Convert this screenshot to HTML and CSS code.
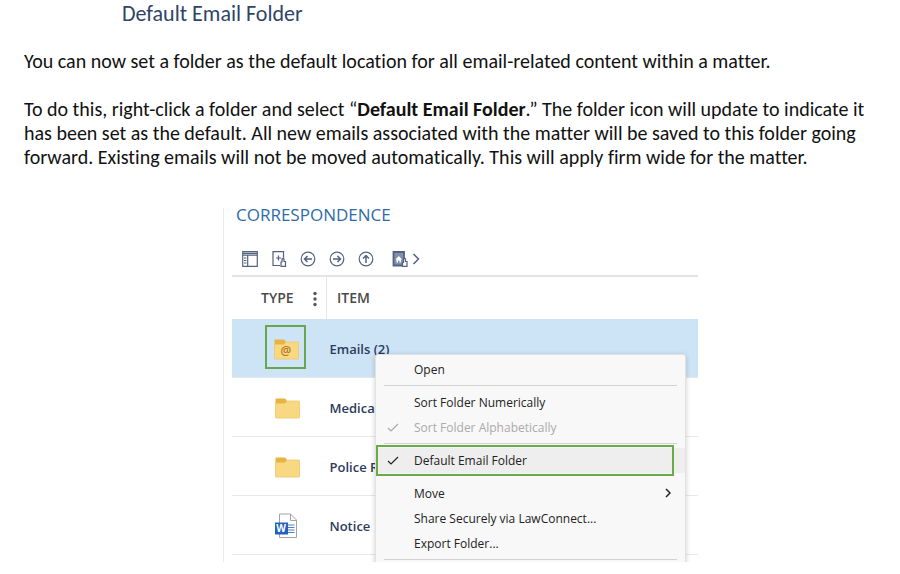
FILE: index.html
```html
<!DOCTYPE html>
<html lang="en">

<head>
  <meta charset="UTF-8">
  <meta name="viewport" content="width=device-width, initial-scale=1.0">
  <title>Default Email Folder</title>
  <link rel="stylesheet" href="styles.css">
</head>

<body>
  <!-- shared folder icon -->
  <svg class="defs" width="0" height="0" aria-hidden="true">
    <symbol id="folder" viewBox="0 0 25 22">
      <path d="M1 1.5h9l2.5 3V8H.5V2z" fill="#e8b342" />
      <path d="M.5 6.5h9l3-2.500h11.500q.5 0 .5.5v16q0 .5-.5.5H1q-.5 0-.5-.5z" fill="#f8d982" stroke="#efc765" stroke-width=".8" />
    </symbol>
  </svg>

  <main class="doc">
    <h1>Default Email Folder</h1>
    <p>You can now set a folder as the default location for all email-related content within a matter.</p>
    <p>To do this, right-click a folder and select “<strong>Default Email Folder</strong>.” The folder icon will update to indicate it has been set as the default. All new emails associated with the matter will be saved to this folder going forward. Existing emails will not be moved automatically. This will apply firm wide for the matter.</p>

    <section class="panel">
      <h2>CORRESPONDENCE</h2>

      <div class="toolbar">
        <button type="button" aria-label="Layout">
          <svg width="16" height="16" viewBox="0 0 16 16">
            <path d="M.7.7h14.600v14.600H.7zM.7 4.200h14.600M5.700 4.200v11M1 2.400h14M2 7h2.500M2 9.500h2.500M2 12h2.500" />
          </svg>
        </button>
        <button type="button" aria-label="New document">
          <svg width="16" height="16" viewBox="0 0 16 16">
            <path d="M9 14.500H2V.7h10.500v6M5 7h5M7.500 4.500v5M10 15.300V11h1V8q1-1 2 0v2.500h1.500v4.800z" />
          </svg>
        </button>
        <button type="button" aria-label="Back">
          <svg width="16" height="16" viewBox="0 0 16 16">
            <circle cx="8" cy="8" r="6.800" />
            <path class="arrow" d="M12 8H4.500M7.500 5l-3 3 3 3" />
          </svg>
        </button>
        <button type="button" aria-label="Forward">
          <svg width="16" height="16" viewBox="0 0 16 16">
            <circle cx="8" cy="8" r="6.800" />
            <path class="arrow" d="M4 8h7.500M8.500 5l3 3-3 3" />
          </svg>
        </button>
        <button type="button" aria-label="Up">
          <svg width="16" height="16" viewBox="0 0 16 16">
            <circle cx="8" cy="8" r="6.800" />
            <path class="arrow" d="M8 12V4.500M5 7.500l3-3 3 3" />
          </svg>
        </button>
        <button type="button" class="home" aria-label="Home folder">
          <svg width="28" height="16" viewBox="0 0 28 16">
            <path d="M1.500 1h10.500v13.500H1.500z" fill="#8191b0" stroke-width="1.800" />
            <path d="M3.500 8.500l3.300-3.500 3.300 3.500H9v3H7.500V9.500H6v2H4.500v-3z" fill="#fff" stroke="none" />
            <path d="M10.500 15.300V11.500h1V8q1-1 2 0v2.500h1.500v4.800z" fill="#fff" />
            <path d="M21.500 3l5 5-5 5" stroke-width="1.500" />
          </svg>
        </button>
      </div>

      <table>
        <thead>
          <tr>
            <th class="type">
              <span>TYPE</span>
              <svg width="4" height="16" viewBox="0 0 4 16">
                <circle cx="2" cy="2.500" r="1.700" />
                <circle cx="2" cy="8" r="1.700" />
                <circle cx="2" cy="13.500" r="1.700" />
              </svg>
            </th>
            <th>ITEM</th>
          </tr>
        </thead>
        <tbody>
          <tr class="selected">
            <td class="type">
              <span class="marked">
                <svg width="25" height="22" viewBox="0 0 25 22">
                  <use href="#folder" />
                  <text x="12" y="17" class="at">@</text>
                </svg>
              </span>
            </td>
            <td>Emails (2)</td>
          </tr>
          <tr>
            <td class="type"><svg width="25" height="22"><use href="#folder" /></svg></td>
            <td>Medical</td>
          </tr>
          <tr>
            <td class="type"><svg width="25" height="22"><use href="#folder" /></svg></td>
            <td>Police Report</td>
          </tr>
          <tr>
            <td class="type">
              <svg width="24" height="26" viewBox="0 0 24 26">
                <path d="M4.500 1h11l6 6v17.500h-17z" fill="#fff" stroke="#a3a3a3" />
                <path d="M15.500 1v6.500h6" fill="none" stroke="#a3a3a3" />
                <path d="M13 12h6.500M13 14.500h6.500M13 17h6.500M13 19.500h6.500" stroke="#4a7fd0" stroke-width="1.200" />
                <path d="M0 9.500h13v12H0z" fill="#2660bd" />
                <text x="6" y="19" class="word">W</text>
              </svg>
            </td>
            <td>Notice</td>
          </tr>
        </tbody>
      </table>

      <div class="menu" role="menu">
        <button type="button" role="menuitem">Open</button>
        <hr>
        <button type="button" role="menuitem">Sort Folder Numerically</button>
        <button type="button" role="menuitem" disabled>
          <svg class="check" width="12" height="10" viewBox="0 0 12 10"><path d="M1 5l3 3 7-7" /></svg>
          Sort Folder Alphabetically
        </button>
        <hr>
        <button type="button" role="menuitem" class="active">
          <svg class="check" width="12" height="10" viewBox="0 0 12 10"><path d="M1 5l3 3 7-7" /></svg>
          Default Email Folder
        </button>
        <hr class="blank">
        <button type="button" role="menuitem">
          Move
          <svg class="more" width="6" height="10" viewBox="0 0 6 10"><path d="M1 1l4 4-4 4" /></svg>
        </button>
        <button type="button" role="menuitem">Share Securely via LawConnect...</button>
        <button type="button" role="menuitem">Export Folder...</button>
        <hr>
      </div>
    </section>
  </main>
</body>

</html>
```
FILE: styles.css
```css
body {
  margin: 0;
  background: #fff;
  color: #111;
  font-family: Carlito, Lato, sans-serif;
}

.defs {
  position: absolute;
}

.doc {
  padding: 2px 24px 12px;
  font-size: 20px;
  font-variant-ligatures: none;
  line-height: 24px;
}

.doc h1 {
  margin: 0 0 23px 98px;
  color: #2f4568;
  font-size: 22px;
  font-weight: 400;
}

.doc p {
  margin: 0 0 24px;
}

.panel {
  position: relative;
  box-sizing: border-box;
  max-width: 475px;
  height: 354px;
  margin: 39px 0 0 199px;
  padding-left: 8px;
  border-left: 1px solid #ececec;
  overflow: hidden;
  color: #2c3a5c;
  font-family: "Open Sans", "Noto Sans", sans-serif;
  font-size: 13px;
}

.panel h2 {
  margin: 0 0 27px 4px;
  color: #2f6ba8;
  font-size: 17px;
  font-weight: 400;
  line-height: 14px;
}

.toolbar {
  display: flex;
  align-items: center;
  gap: 13px;
  height: 20px;
  padding: 0 0 6px 10px;
  border-bottom: 2px solid #e4e4e4;
}

.toolbar button {
  padding: 0;
  border: 0;
  background: none;
}

.toolbar .home {
  margin-left: 5px;
}

.toolbar svg {
  display: block;
  fill: none;
  stroke: #53627f;
  stroke-width: 1.2;
}

.toolbar .arrow {
  stroke-width: 1.5;
}

table {
  width: 100%;
  border-collapse: collapse;
  table-layout: fixed;
}

th {
  height: 42px;
  padding: 0 0 0 10px;
  color: #4a4a4a;
  font-size: 14px;
  font-weight: 600;
  text-align: left;
}

th.type {
  width: 65px;
  padding: 0 0 0 29px;
  border-right: 1px solid #e6e6e6;
}

th svg {
  margin-left: 16px;
  fill: #555;
  vertical-align: middle;
}

td {
  height: 56px;
  padding: 2px 0 0 3px;
  border-bottom: 1px solid #e8e8e8;
  font-weight: 600;
}

td.type {
  padding: 2px 0 0 43px;
}

td svg {
  display: block;
}

.at {
  fill: #b5762c;
  font-size: 12px;
  text-anchor: middle;
}

.word {
  fill: #fff;
  font-size: 10px;
  font-weight: 700;
  text-anchor: middle;
}

.selected {
  background: #cde4f7;
}

.marked {
  display: flex;
  align-items: center;
  justify-content: center;
  width: 35px;
  height: 36px;
  margin: 0 0 4px -10px;
  padding: 4px 0 0 2px;
  border: 2px solid #6aa552;
}

.menu {
  position: absolute;
  top: 146px;
  left: 151px;
  right: 12px;
  box-sizing: border-box;
  padding: 2px 0 20px;
  border: 1px solid #e2e2e2;
  border-radius: 3px;
  background: #f8f8f8;
  box-shadow: 0 1px 5px rgba(0, 0, 0, 0.2);
}

.menu button {
  position: relative;
  display: block;
  width: 100%;
  height: 25px;
  padding: 0 0 0 38px;
  border: 0;
  background: none;
  color: #222;
  font: 12px "Open Sans", "Noto Sans", sans-serif;
  text-align: left;
}

.menu button:disabled {
  color: #aaa;
}

.menu hr {
  height: 1px;
  margin: 3px 8px 4px;
  border: 0;
  background: #d2d2d2;
}

.menu .blank {
  background: none;
}

.menu .active {
  background: #eee;
}

.menu .active::after {
  content: '';
  position: absolute;
  top: -3px;
  right: 11px;
  bottom: -3px;
  left: 0;
  border: 2px solid #6aab45;
}

.menu svg {
  position: absolute;
  top: 8px;
  fill: none;
  stroke: currentColor;
  stroke-width: 1.2;
}

.menu .check {
  left: 11px;
}

.menu .more {
  right: 14px;
  top: 7px;
  stroke-width: 1.5;
}
```
